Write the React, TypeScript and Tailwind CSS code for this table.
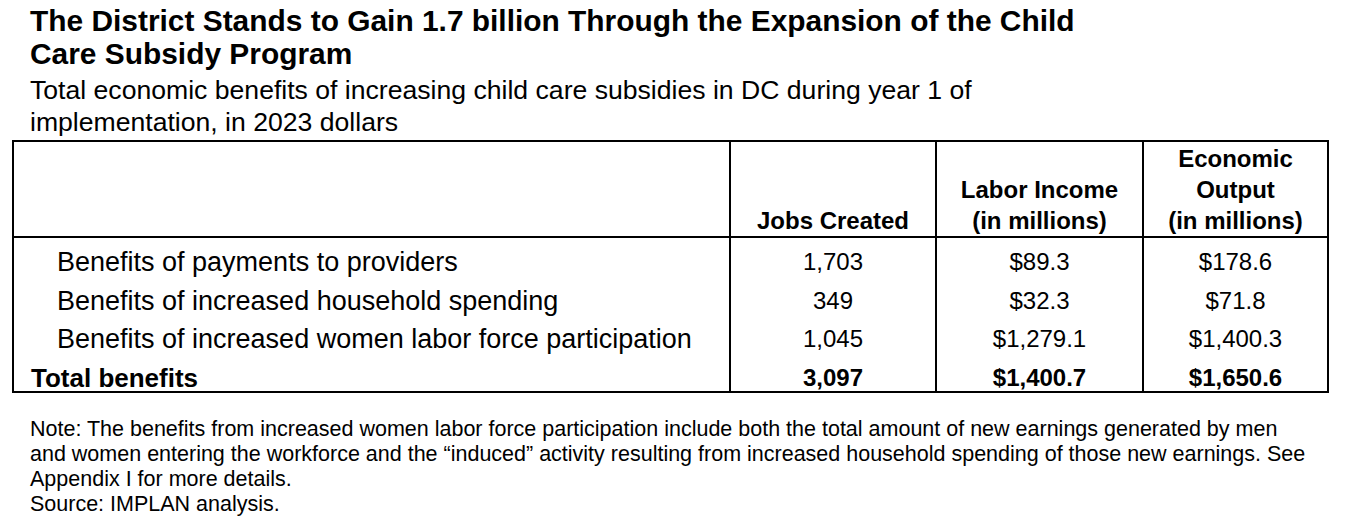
const rows = [
  { label: 'Benefits of payments to providers', jobs: '1,703', income: '$89.3', output: '$178.6' },
  { label: 'Benefits of increased household spending', jobs: '349', income: '$32.3', output: '$71.8' },
  { label: 'Benefits of increased women labor force participation', jobs: '1,045', income: '$1,279.1', output: '$1,400.3' },
];

const cols = 'grid grid-cols-[717px_206px_207px_183px]';

export default function App() {
  return (
    <div className="w-[1350px] h-[529px] bg-white text-black font-['Liberation_Sans',Arial,sans-serif] overflow-hidden">
      {/* Title */}
      <h1 className="pl-[30px] pt-[4px] text-[29.9px] leading-[33px] font-bold whitespace-nowrap">
        The District Stands to Gain 1.7 billion Through the Expansion of the Child
        <br />
        Care Subsidy Program
      </h1>
      <p className="pl-[30px] mt-[5px] text-[26.6px] leading-[31.5px] whitespace-nowrap">
        Total economic benefits of increasing child care subsidies in DC during year 1 of
        <br />
        implementation, in 2023 dollars
      </p>

      {/* Table */}
      <div className="ml-[12px] mt-[2px] w-[1317px] border-2 border-black">
        <div className={`${cols} h-[96px] border-b-2 border-black text-[24px] leading-[31px] font-bold`}>
          <div className="border-r-2 border-black" />
          <div className="border-r-2 border-black flex flex-col justify-end items-center">
            <span>Jobs Created</span>
          </div>
          <div className="border-r-2 border-black flex flex-col justify-end items-center text-center">
            <span>Labor Income</span>
            <span>(in millions)</span>
          </div>
          <div className="flex flex-col justify-end items-center text-center">
            <span>Economic</span>
            <span>Output</span>
            <span>(in millions)</span>
          </div>
        </div>

        <div className="h-[153px] overflow-hidden">
          {rows.map((r, i) => (
            <div key={r.label} className={cols}>
              <div className={`border-r-2 border-black pl-[43px] text-[27px] leading-[38.5px] whitespace-nowrap ${i === 0 ? 'pt-[5px]' : ''}`}>
                {r.label}
              </div>
              <div className={`border-r-2 border-black text-center text-[24px] leading-[38.5px] ${i === 0 ? 'pt-[5px]' : ''}`}>
                {r.jobs}
              </div>
              <div className={`border-r-2 border-black text-center text-[24px] leading-[38.5px] ${i === 0 ? 'pt-[5px]' : ''}`}>
                {r.income}
              </div>
              <div className={`text-center text-[24px] leading-[38.5px] ${i === 0 ? 'pt-[5px]' : ''}`}>
                {r.output}
              </div>
            </div>
          ))}
          <div className={`${cols} font-bold`}>
            <div className="border-r-2 border-black pl-[17px] text-[26px] leading-[38.5px]">Total benefits</div>
            <div className="border-r-2 border-black text-center text-[24px] leading-[38.5px]">3,097</div>
            <div className="border-r-2 border-black text-center text-[24px] leading-[38.5px]">$1,400.7</div>
            <div className="text-center text-[24px] leading-[38.5px]">$1,650.6</div>
          </div>
        </div>
      </div>

      {/* Notes */}
      <div className="pl-[30px] mt-[24px] text-[21.5px] leading-[25px] whitespace-nowrap">
        <p>
          Note: The benefits from increased women labor force participation include both the total amount of new earnings generated by men
          <br />
          and women entering the workforce and the “induced” activity resulting from increased household spending of those new earnings. See
          <br />
          Appendix I for more details.
        </p>
        <p>Source: IMPLAN analysis.</p>
      </div>
    </div>
  );
}
